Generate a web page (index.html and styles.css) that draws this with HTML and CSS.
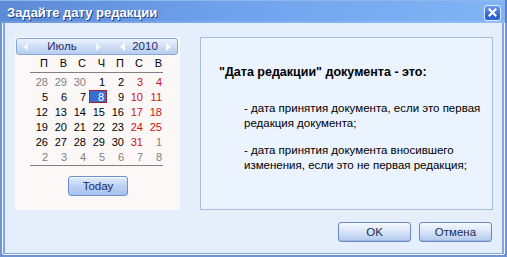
FILE: index.html
```html
<!DOCTYPE html>
<html lang="ru">
<head>
<meta charset="utf-8">
<title>Задайте дату редакции</title>
<link rel="stylesheet" href="styles.css">
</head>
<body>
<div class="window">
  <div class="titlebar">
    <span class="title">Задайте дату редакции</span>
    <span class="close">
      <svg width="9" height="9" viewBox="0 0 9 9"><path d="M1.5 1.5 L7.5 7.5 M7.5 1.5 L1.5 7.5" stroke="#fff" stroke-width="2.2" stroke-linecap="square"/></svg>
    </span>
  </div>
  <div class="client">
    <div class="panels">
      <div class="calendar">
        <div class="navbar">
          <span class="arrow left"></span>
          <span class="nav-label">Июль</span>
          <span class="arrow right"></span>
          <span></span>
          <span class="arrow left strong"></span>
          <span class="nav-label">2010</span>
          <span class="arrow right strong"></span>
          <span></span>
        </div>
        <div class="days">
          <div class="dow">
            <span>П</span><span>В</span><span>С</span><span>Ч</span><span>П</span><span>С</span><span>В</span>
          </div>
          <div class="grid">
            <span class="other">28</span><span class="other">29</span><span class="other">30</span><span>1</span><span>2</span><span class="wk">3</span><span class="wk">4</span>
            <span>5</span><span>6</span><span>7</span><span class="sel"><b>8</b></span><span>9</span><span class="wk">10</span><span class="wk">11</span>
            <span>12</span><span>13</span><span>14</span><span>15</span><span>16</span><span class="wk">17</span><span class="wk">18</span>
            <span>19</span><span>20</span><span>21</span><span>22</span><span>23</span><span class="wk">24</span><span class="wk">25</span>
            <span>26</span><span>27</span><span>28</span><span>29</span><span>30</span><span class="wk">31</span><span class="other">1</span>
            <span class="other">2</span><span class="other">3</span><span class="other">4</span><span class="other">5</span><span class="other">6</span><span class="other">7</span><span class="other">8</span>
          </div>
        </div>
        <div class="today-row"><span class="btn today">Today</span></div>
      </div>
      <div class="info">
        <p class="head">"Дата редакции" документа - это:</p>
        <p class="item">- дата принятия документа, если это первая редакция документа;</p>
        <p class="item">- дата принятия документа вносившего изменения, если это не первая редакция;</p>
      </div>
    </div>
    <div class="buttons">
      <span class="btn dlg">OK</span>
      <span class="btn dlg">Отмена</span>
    </div>
  </div>
</div>
</body>
</html>
```
FILE: styles.css
```css
html, body {
  margin: 0;
  padding: 0;
  background: #ffffff;
}
body {
  font-family: "Liberation Sans", Arial, sans-serif;
  font-size: 11px;
  color: #000;
}
.window {
  width: 507px;
  height: 257px;
  box-sizing: border-box;
  background: #6f93d3;
  display: flex;
  flex-direction: column;
}
.titlebar {
  height: 23px;
  flex: none;
  display: flex;
  align-items: center;
  justify-content: space-between;
  padding: 0 4px 0 7px;
  background: linear-gradient(to right, #5b8ad6 0%, #6fa2ec 45%, #80b5f5 100%);
  border-right: 2px solid #5a82c8;
  box-shadow: inset 0 1px 0 #8fb7ee, inset 0 -2px 0 rgba(255,255,255,0.12);
}
.title {
  font-family: "Liberation Sans", Arial, sans-serif;
  font-weight: bold;
  font-size: 13px;
  color: #ffffff;
  text-shadow: 1px 1px 0 #1e3f86;
  padding-top: 1px;
}
.close {
  width: 17px;
  height: 16px;
  box-sizing: border-box;
  border: 1px solid #dfe9fb;
  border-radius: 3px;
  background: linear-gradient(#6b9bee, #2f5fcf 70%, #3365d3);
  display: flex;
  align-items: center;
  justify-content: center;
  margin-top: 2px;
}
.client {
  flex: 1;
  margin: 0 3px 3px 3px;
  border-left: 2px solid #83a7df;
  border-right: 2px solid #83a7df;
  border-bottom: 1px solid #83a7df;
  box-shadow: -1px 0 0 #f4f8ff, 1px 0 0 #f4f8ff, 0 1px 0 #f4f8ff;
  background: #e5effc;
  padding: 14px 9px 0 10px;
  display: flex;
  flex-direction: column;
}
.panels {
  display: flex;
  gap: 20px;
  height: 173px;
}
.calendar {
  width: 165px;
  background: #fcf8f8;
  padding: 1px 2px 0 1px;
  box-sizing: border-box;
}
.navbar {
  height: 17px;
  box-sizing: border-box;
  border: 1px solid #86a6d9;
  border-radius: 3px;
  background: linear-gradient(#eef4fd, #c9daf4 60%, #b7cdf0);
  display: grid;
  grid-template-columns: 17px 56px 16px 8px 16px 30px 16px 1px;
  align-items: center;
  color: #1b2b6b;
  font-size: 11.5px;
}
.nav-label {
  text-align: center;
  line-height: 15px;
}
.arrow {
  justify-self: center;
  width: 0;
  height: 0;
  border-top: 4px solid transparent;
  border-bottom: 4px solid transparent;
}
.arrow.left { border-right: 5px solid rgba(255,255,255,0.75); }
.arrow.right { border-left: 5px solid rgba(255,255,255,0.75); }
.arrow.strong.left { border-right-color: #ffffff; }
.arrow.strong.right { border-left-color: #ffffff; }
.days {
  margin-left: 14px;
  width: 133px;
  font-size: 11px;
}
.dow, .grid {
  display: grid;
  grid-template-columns: repeat(7, 19px);
}
.dow {
  height: 17px;
  line-height: 17px;
  border-bottom: 1px solid #808080;
}
.dow span, .grid span {
  text-align: right;
  padding-right: 1px;
}
.grid {
  padding-top: 2px;
  grid-auto-rows: 15px;
  line-height: 15px;
  border-bottom: 1px solid #808080;
}
.grid .other { color: #808080; }
.grid .wk { color: #cc1111; }
.grid .sel { padding-right: 0; }
.grid .sel b {
  font-weight: normal;
  display: block;
  height: 13px;
  line-height: 12px;
  box-sizing: border-box;
  margin: 0 -1px 0 2px;
  padding-right: 2px;
  border: 1px solid #a3212c;
  background: #3b6ed4;
  color: #ffffff;
}
.today-row {
  display: flex;
  justify-content: center;
  padding: 10px 0 0 2px;
}
.btn {
  display: inline-flex;
  align-items: center;
  justify-content: center;
  box-sizing: border-box;
  border-radius: 3px;
  color: #1b2b6b;
}
.today {
  width: 60px;
  height: 20px;
  border: 1px solid #6f8fcc;
  background: linear-gradient(#e4edfb, #bcd1f3 50%, #a7c2ee);
  box-shadow: inset 0 1px 0 #f6f9ff;
  font-size: 11.5px;
}
.info {
  width: 293px;
  box-sizing: border-box;
  border: 1px solid #a4bde3;
  background: #eaf3fe;
  padding: 27px 6px 0 18px;
}
.info p {
  margin: 0;
  line-height: 15px;
}
.head {
  font-weight: bold;
  font-size: 12.5px;
}
.item {
  margin-top: 21px !important;
  padding-left: 25px;
  font-size: 11.5px;
}
.item + .item {
  margin-top: 12px !important;
}
.buttons {
  display: flex;
  justify-content: flex-end;
  gap: 8px;
  padding-top: 12px;
  padding-right: 1px;
}
.dlg {
  width: 73px;
  height: 20px;
  border: 1px solid #6a88c2;
  background: linear-gradient(#f6f9fe, #d9e6f8 45%, #b2caee);
  box-shadow: inset 0 -1px 0 #9db8e6;
  color: #1e2a55;
  font-size: 11.5px;
}
```
